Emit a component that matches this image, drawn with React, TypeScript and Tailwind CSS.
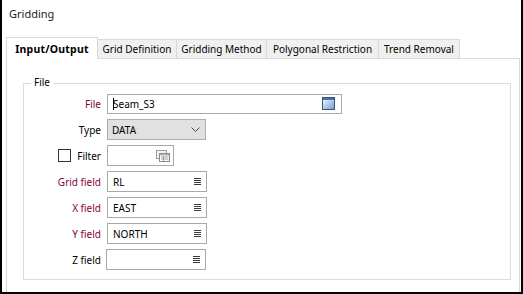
import React from "react";

const Hamburger = () => (
  <svg width="7" height="8" viewBox="0 0 7 8" className="shrink-0">
    <rect x="0" y="0" width="7" height="1" fill="#3a3a3a" />
    <rect x="0" y="2" width="7" height="1" fill="#3a3a3a" />
    <rect x="0" y="4" width="7" height="1" fill="#3a3a3a" />
    <rect x="0" y="6" width="7" height="1" fill="#3a3a3a" />
  </svg>
);

const BrowseIcon = () => (
  <svg width="13" height="13" viewBox="0 0 13 13" className="shrink-0">
    <defs>
      <linearGradient id="bg1" x1="0" y1="0" x2="1" y2="1">
        <stop offset="0" stopColor="#ffffff" />
        <stop offset="1" stopColor="#6f98d6" />
      </linearGradient>
    </defs>
    <rect x="0.5" y="0.5" width="12" height="12" fill="url(#bg1)" stroke="#3b5578" />
    <rect x="1" y="1" width="11" height="2" fill="#4a72b0" />
  </svg>
);

const TableIcon = () => (
  <svg width="14" height="12" viewBox="0 0 14 12" className="shrink-0">
    <rect x="0.5" y="0.5" width="10" height="8" fill="#f4f4f4" stroke="#9a9a9a" />
    <rect x="3.5" y="3.5" width="10" height="8" fill="#ffffff" stroke="#8c8c8c" />
    <rect x="4" y="4" width="9" height="1.5" fill="#b0b0b0" />
    <line x1="5" y1="7" x2="12.5" y2="7" stroke="#a0a0a0" />
    <line x1="5" y1="9" x2="12.5" y2="9" stroke="#a0a0a0" />
    <line x1="7.5" y1="6" x2="7.5" y2="11" stroke="#a0a0a0" />
  </svg>
);

const Chevron = () => (
  <svg width="9" height="5" viewBox="0 0 9 5" className="shrink-0">
    <polyline points="0.5,0.5 4.5,4.5 8.5,0.5" fill="none" stroke="#444" strokeWidth="1" />
  </svg>
);

function FieldRow({ label, value, required }: { label: string; value: string; required?: boolean }) {
  return (
    <div className="flex items-center h-[21px]">
      <div className={`w-[77px] shrink-0 text-right ${required ? "text-[#800040]" : "text-black"}`}>{label}</div>
      <div className="ml-[6px] w-[100px] h-[21px] border border-[#a9a9a9] bg-white flex items-center pl-[5px] pr-[5px]">
        <span className="flex-1 text-black">{value}</span>
        <Hamburger />
      </div>
    </div>
  );
}

export default function App() {
  return (
    <div className="w-[523px] h-[294px] bg-white border-l-2 border-r-2 border-b-2 border-black flex flex-col font-['Noto_Sans',sans-serif] text-[10px] leading-[14px] text-black">
      <div className="h-[37px] pl-[7px] pt-[6px] text-[11px] leading-[16px] text-[#1a1a1a]">Gridding</div>
      <div className="flex items-end h-[21px] pl-[4px]">
        <div className="relative z-10 -mb-px h-[22px] w-[92px] border border-b-0 border-[#d9d9d9] bg-white flex items-center justify-center font-bold text-[10.5px] tracking-[0.2px]">
          Input/Output
        </div>
        <div className="h-[19px] w-[79px] border-t border-r border-[#d9d9d9] bg-[#f0f0f0] flex items-center justify-center">Grid Definition</div>
        <div className="h-[19px] w-[90px] border-t border-r border-[#d9d9d9] bg-[#f0f0f0] flex items-center justify-center">Gridding Method</div>
        <div className="h-[19px] w-[112px] border-t border-r border-[#d9d9d9] bg-[#f0f0f0] flex items-center justify-center">Polygonal Restriction</div>
        <div className="h-[19px] w-[81px] border-t border-r border-[#d9d9d9] bg-[#f0f0f0] flex items-center justify-center">Trend Removal</div>
      </div>
      <div className="flex-1 ml-[4px] mr-[1px] border-t border-l border-r border-[#d9d9d9]">
        <div className="relative ml-[16px] mr-[8px] mt-[24px] h-[197px] border border-[#dcdcdc] pt-[9px] flex flex-col gap-[5px]">
          <span className="absolute left-[7px] top-[-9px] px-[3px] bg-white leading-[14px]">File</span>

          <div className="flex items-center h-[21px]">
            <div className="w-[77px] shrink-0 text-right text-[#800040]">File</div>
            <div className="relative ml-[6px] w-[235px] h-[20px] border border-[#a9a9a9] bg-white flex items-center pl-[5px] pr-[6px]">
              <span className="flex-1">Seam_S3</span>
              <span className="absolute left-[5px] top-[3px] w-px h-[12px] bg-black" />
              <BrowseIcon />
            </div>
          </div>

          <div className="flex items-center h-[21px]">
            <div className="w-[77px] shrink-0 text-right">Type</div>
            <div className="ml-[6px] w-[99px] h-[21px] border border-[#adadad] bg-[#e1e1e1] flex items-center pl-[4px] pr-[5px]">
              <span className="flex-1">DATA</span>
              <Chevron />
            </div>
          </div>

          <div className="flex items-center h-[21px]">
            <div className="w-[77px] shrink-0 flex items-center justify-end gap-[6px]">
              <span className="w-[13px] h-[13px] border border-[#333] bg-white" />
              <span>Filter</span>
            </div>
            <div className="ml-[6px] w-[67px] h-[21px] border border-[#a9a9a9] bg-white flex items-center justify-end pr-[3px]">
              <TableIcon />
            </div>
          </div>

          <FieldRow label="Grid field" value="RL" required />
          <FieldRow label="X field" value="EAST" required />
          <FieldRow label="Y field" value="NORTH" required />
          <div className="flex items-center h-[21px]">
            <div className="w-[77px] shrink-0 text-right">Z field</div>
            <div className="ml-[5px] w-[100px] h-[21px] border border-[#a9a9a9] bg-white flex items-center pl-[5px] pr-[5px]">
              <span className="flex-1" />
              <Hamburger />
            </div>
          </div>
        </div>
      </div>
    </div>
  );
}
